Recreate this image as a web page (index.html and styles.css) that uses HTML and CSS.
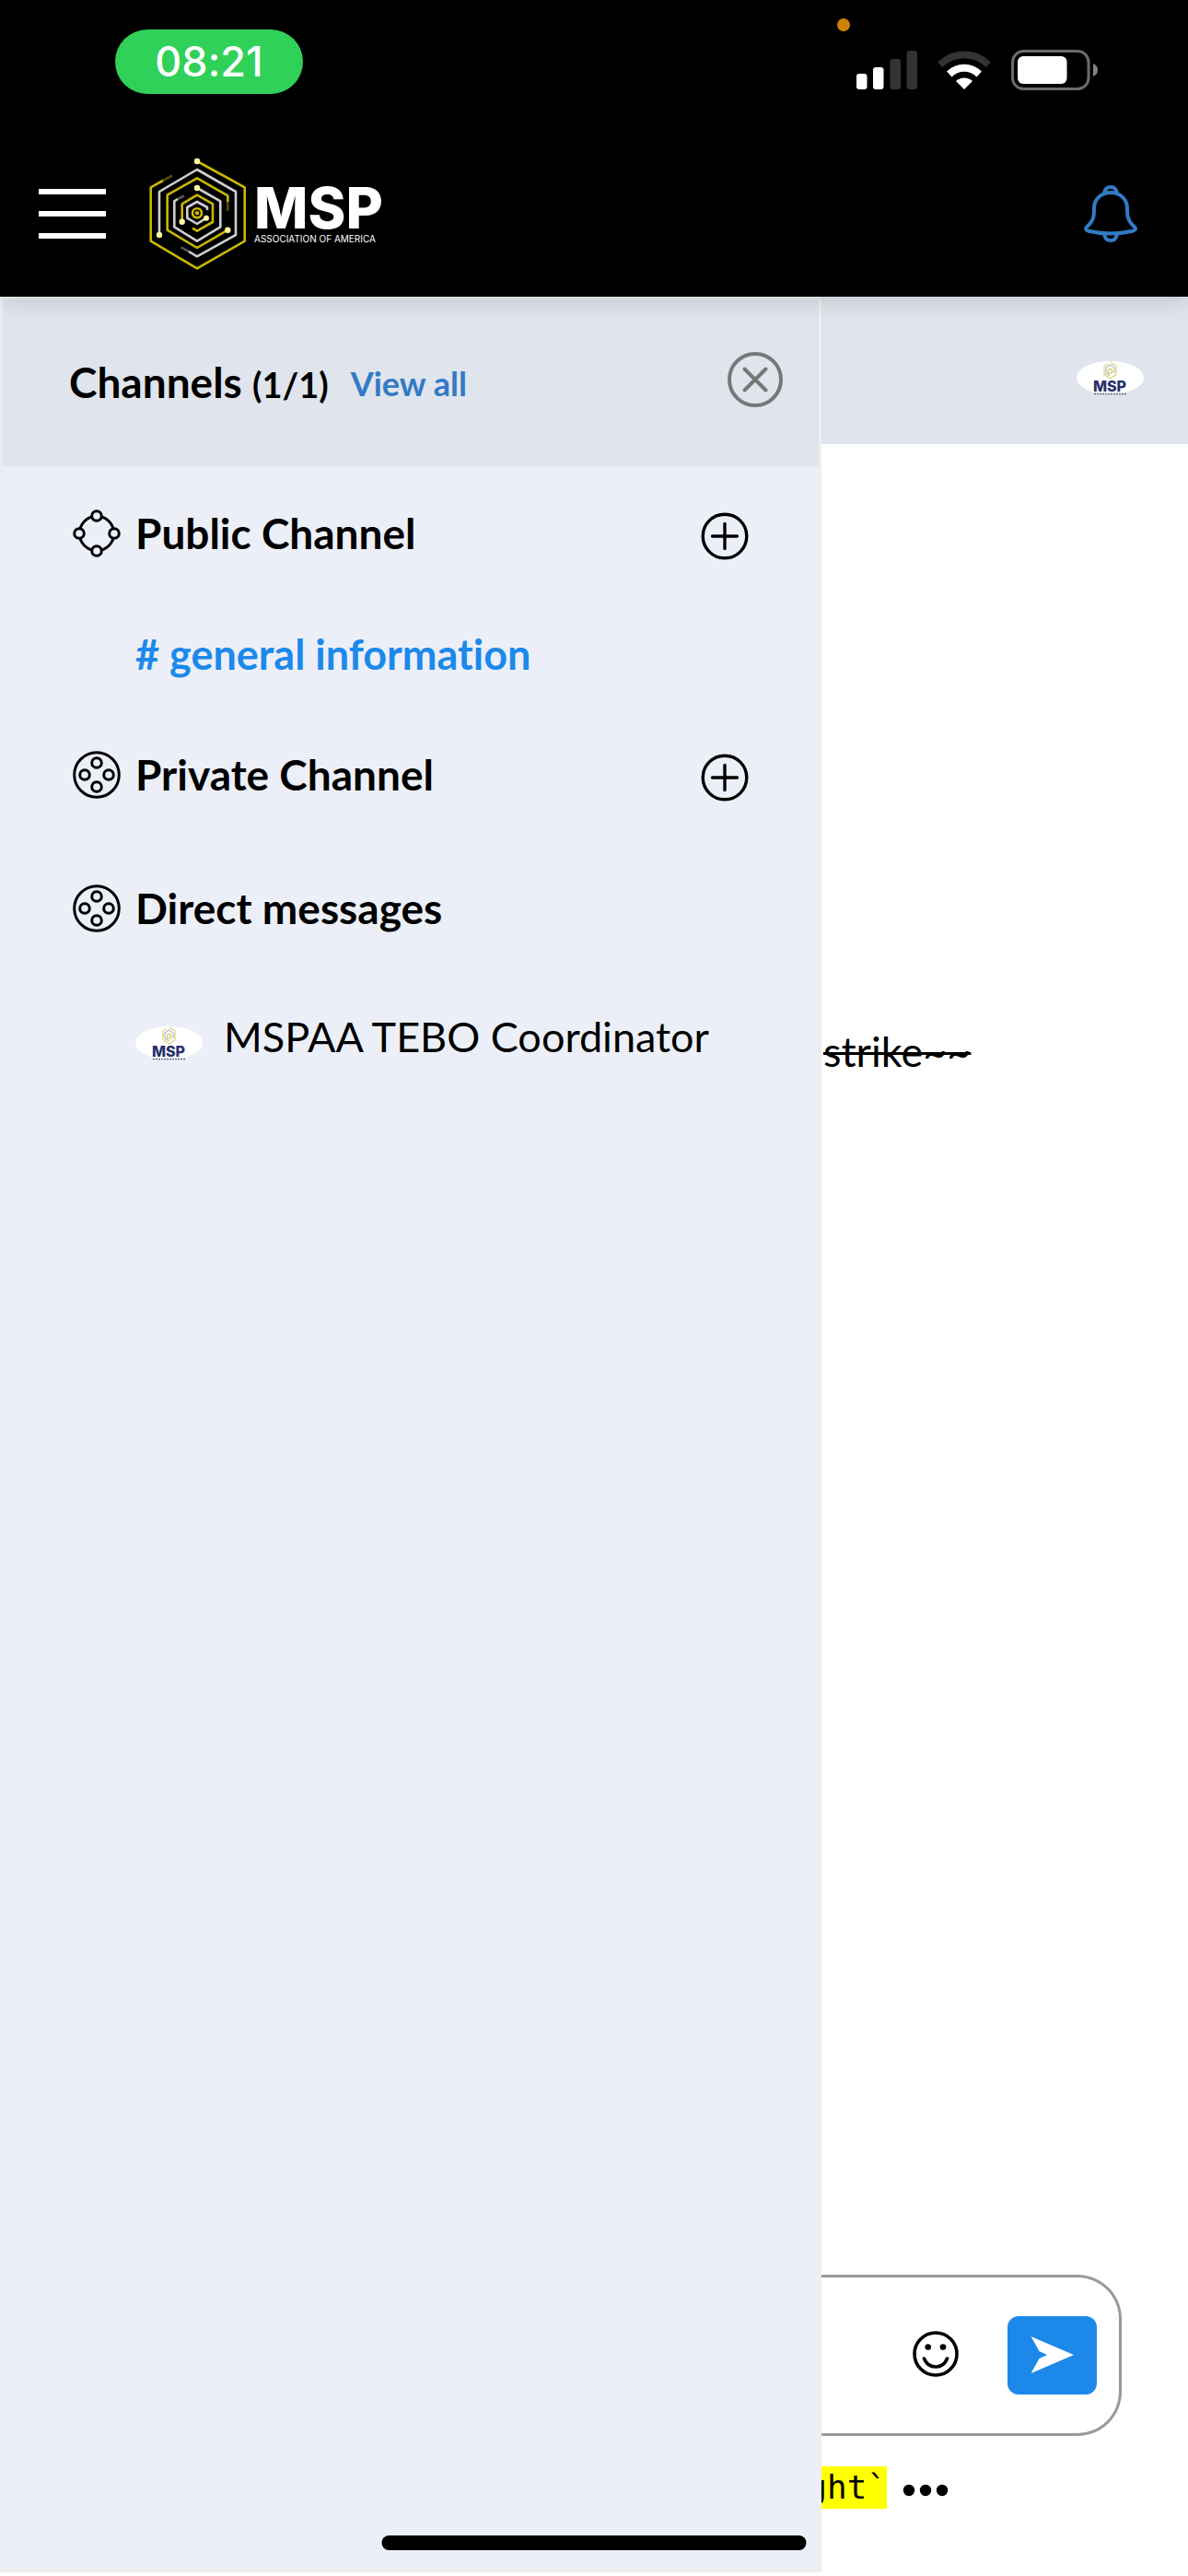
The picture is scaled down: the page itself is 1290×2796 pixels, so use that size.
FILE: index.html
```
<!DOCTYPE html>
<html lang="en">

<head>
    <meta charset="UTF-8">
    <meta name="viewport" content="width=device-width, initial-scale=1.0">
    <title>MSP Association of America - Channels</title>
    <link rel="stylesheet" href="styles.css">
</head>

<body>
    <!-- shared shapes -->
    <svg class="sprite" aria-hidden="true">
        <symbol id="hex-logo" viewBox="-2 -2 108 126">
            <g fill="none" stroke-width="2.6" stroke-linejoin="round">
                <path class="gold" d="M51 4 102.7 32.3V90.7L51 120.3 .7 90.7V32.3L14 25" />
                <path class="gold fade" d="M14 25 24 19.5" />
                <path class="silver" d="M10 84V37L51 13 93 37V84L51 107.3 42 102" />
                <path class="silver fade" d="M42 102 33.7 97.3" />
                <path class="gold" d="M84.3 48V41.3L51 22.3 18.7 40.7V78.7L51 98 84.3 78.7" />
                <path class="gold fade" d="M84.3 48V58" />
                <path class="silver" d="M51 33 76.3 47.3V75.3L51 90.7 26.3 75.3V47.3L30 45" />
                <path class="silver fade" d="M30 45 37 41.5" />
                <path class="gold" d="M34.7 69.7V50.3L51 40.7 68 50.3V70L51 79.7 46 76.7" />
                <path class="silver" d="M61 65.7 51 72 40.3 65.7V54L51 48 62 54V57" />
                <circle class="gold" cx="51" cy="60.3" r="5" />
                <circle class="gold" cx="51" cy="60.3" r="1" />
            </g>
            <g class="nodes">
                <circle cx="51" cy="4" r="3.2" />
                <circle cx="10" cy="84" r="3.2" />
                <circle cx="84.3" cy="78.7" r="3.2" />
                <circle cx="51" cy="33" r="3.2" />
                <circle cx="34.7" cy="69.7" r="3.2" />
                <circle cx="61" cy="65.7" r="3" />
            </g>
        </symbol>
        <symbol id="avatar" viewBox="0 0 73 38">
            <ellipse cx="36.5" cy="18" rx="36.5" ry="18" fill="#fff" />
            <g fill="none" stroke="#ddd573" stroke-width="1.2">
                <path d="M36.5 1 43 5V14.5L36.5 19 30 14.5V5L34 2.5" />
                <path d="M41 13V7L36.5 4 32 7V13L36.5 16" stroke="#b5b8c4" />
                <path d="M34.5 13V9.5L36.5 8 38.5 9.5V13Z" stroke="#d4c95a" />
            </g>
            <text x="36" y="33" text-anchor="middle" class="avatar-text">MSP</text>
            <path d="M19 35.5H54" stroke="#5c628c" stroke-width="1.5" stroke-dasharray="2 1" />
        </symbol>
        <symbol id="plus" viewBox="0 0 52 52">
            <g fill="none" stroke="#000" stroke-width="3.4" stroke-linecap="round">
                <circle cx="26" cy="26" r="23.8" />
                <path d="M26 12.5V39.500M12.5 26H39.5" />
            </g>
        </symbol>
        <symbol id="group" viewBox="0 0 52 52">
            <g fill="none" stroke="#000" stroke-width="3">
                <circle cx="26" cy="26" r="24.3" />
                <circle cx="26" cy="13" r="5.3" />
                <circle cx="13" cy="26" r="5.3" />
                <circle cx="39" cy="26" r="5.3" />
                <circle cx="26" cy="39" r="5.3" />
            </g>
        </symbol>
    </svg>

    <div class="status-bar">
        <span class="clock">08:21</span>
        <span class="mic-dot"></span>
        <div class="status-icons">
            <svg width="66" height="44" viewBox="0 0 66 44">
                <rect x="0" y="26" width="11.5" height="17" rx="3" fill="#fff" />
                <rect x="18" y="19" width="11.5" height="24" rx="3" fill="#fff" />
                <rect x="36.5" y="10" width="11.5" height="33" rx="3" fill="#333" />
                <rect x="54.5" y="1" width="11.5" height="42" rx="3" fill="#333" />
            </svg>
            <svg width="58" height="44" viewBox="0 0 58 44">
                <path d="M0 13.5A41 41 0 0 1 58 13.5L52.5 19A33 33 0 0 0 5.5 19Z" fill="#333" />
                <path d="M10 23.5A27 27 0 0 1 48 23.5L42.5 29.5A19 19 0 0 0 15.5 29.5Z" fill="#fff" />
                <path d="M20 34A13 13 0 0 1 38 34L29 43Z" fill="#fff" />
            </svg>
            <svg width="94" height="44" viewBox="0 0 94 44">
                <rect x="1.5" y="1.5" width="82.5" height="41" rx="12" fill="none" stroke="#6b6b6b" stroke-width="3" />
                <rect x="7" y="7" width="53.5" height="30" rx="6" fill="#fff" />
                <path d="M89 15Q94 17 94 22T89 29Z" fill="#808080" />
            </svg>
        </div>
    </div>

    <header class="topbar">
        <button class="menu-btn" aria-label="Menu">
            <span></span>
            <span></span>
            <span></span>
        </button>
        <a href="#" class="brand">
            <svg class="brand-mark" aria-hidden="true"><use href="#hex-logo" /></svg>
            <span class="brand-text">
                <span class="brand-name">MSP</span>
                <span class="brand-sub">ASSOCIATION OF AMERICA</span>
            </span>
        </a>
        <button class="bell-btn" aria-label="Notifications">
            <svg width="58" height="62" viewBox="0 0 58 62">
                <g fill="none" stroke="#337ac4" stroke-width="4" stroke-linejoin="round">
                    <path d="M29 8C18 8 11 16 11 25C11 34 11 38 2.5 46Q1 49 6 50Q29 55 52 50Q57 49 55.5 46C47 38 47 34 47 25C47 16 40 8 29 8Z" />
                    <path d="M22 9Q23 2 29 2T36 9" />
                    <path d="M22 53Q23 60 29 60T36 53" />
                </g>
            </svg>
        </button>
    </header>

    <main class="layout">
        <aside class="drawer">
            <div class="drawer-header">
                <h2>Channels <span class="count">(1/1)</span></h2>
                <a href="#" class="view-all">View all</a>
                <button class="close-btn" aria-label="Close">
                    <svg width="60" height="60" viewBox="0 0 60 60">
                        <g fill="none" stroke="#777" stroke-width="4" stroke-linecap="round">
                            <circle cx="30" cy="30" r="28" />
                            <path d="M18.5 18.5 41.5 41.5M41.5 18.5 18.5 41.5" />
                        </g>
                    </svg>
                </button>
            </div>

            <nav class="channels">
                <div class="row">
                    <svg class="icon" viewBox="0 0 52 52" aria-hidden="true">
                        <g fill="none" stroke="#000" stroke-width="3">
                            <circle cx="26" cy="26" r="18.7" />
                            <g fill="#eceff8">
                                <circle cx="26" cy="7" r="5.3" />
                                <circle cx="7" cy="26" r="5.3" />
                                <circle cx="45" cy="26" r="5.3" />
                                <circle cx="26" cy="45" r="5.3" />
                            </g>
                        </g>
                    </svg>
                    <h3>Public Channel</h3>
                    <button class="add-btn" aria-label="Add public channel">
                        <svg class="icon"><use href="#plus" /></svg>
                    </button>
                </div>
                <div class="row sub-row">
                    <a href="#" class="channel-link"># general information</a>
                </div>
                <div class="row">
                    <svg class="icon" aria-hidden="true"><use href="#group" /></svg>
                    <h3>Private Channel</h3>
                    <button class="add-btn" aria-label="Add private channel">
                        <svg class="icon"><use href="#plus" /></svg>
                    </button>
                </div>
                <div class="row direct">
                    <svg class="icon" aria-hidden="true"><use href="#group" /></svg>
                    <h3>Direct messages</h3>
                </div>
                <div class="row sub-row">
                    <a href="#" class="user-link">
                        <svg class="avatar" aria-hidden="true"><use href="#avatar" /></svg>
                        <span>MSPAA TEBO Coordinator</span>
                    </a>
                </div>
            </nav>
        </aside>

        <section class="chat">
            <div class="chat-header">
                <svg class="avatar" aria-hidden="true"><use href="#avatar" /></svg>
            </div>
            <div class="messages">
                <p><s>strike~~</s></p>
            </div>
            <div class="composer">
                <button class="emoji-btn" aria-label="Emoji">
                    <svg width="50" height="50" viewBox="0 0 50 50">
                        <g fill="none" stroke="#000" stroke-width="3.6" stroke-linecap="round">
                            <circle cx="25" cy="25" r="23" />
                            <path d="M12.5 30Q16 39 25 39T37.5 30" />
                        </g>
                        <circle cx="16.7" cy="17.5" r="3.3" />
                        <circle cx="33" cy="17.5" r="3.3" />
                    </svg>
                </button>
                <button class="send-btn" aria-label="Send">
                    <svg width="48" height="40" viewBox="0 0 48 40">
                        <path d="M.5 0 47 20 .5 40 9.5 24 18 20 9.5 16Z" fill="#fff" />
                    </svg>
                </button>
            </div>
            <div class="format-hint">
                <div class="code-hint"><code>ght`</code></div>
                <button class="more-btn" aria-label="More formatting">
                    <svg width="50" height="14" viewBox="0 0 50 14">
                        <circle cx="7" cy="7" r="6.2" />
                        <circle cx="25" cy="7" r="6.2" />
                        <circle cx="43" cy="7" r="6.2" />
                    </svg>
                </button>
            </div>
        </section>
    </main>

    <div class="home-indicator"></div>
</body>

</html>
```
FILE: styles.css
```
* {
    margin: 0;
    padding: 0;
    box-sizing: border-box;
}

body {
    font-family: Lato, "Liberation Sans", sans-serif;
    font-size: 45px;
    font-variant-ligatures: none;
    line-height: 54px;
    color: #000;
    background-color: #fff;
    display: flex;
    flex-direction: column;
    min-height: 100vh;
}

button {
    background: none;
    border: none;
    cursor: pointer;
}

a {
    text-decoration: none;
    color: inherit;
}

svg {
    display: block;
    flex-shrink: 0;
}

.sprite {
    display: none;
}

/* status bar */
.status-bar {
    position: relative;
    z-index: 3;
    display: flex;
    justify-content: space-between;
    align-items: flex-start;
    padding: 32px 98px 40px 125px;
    background-color: #000;
}

.clock {
    width: 204px;
    height: 70px;
    border-radius: 35px;
    background-color: #30d158;
    color: #fff;
    font-family: Inter, sans-serif;
    font-size: 45px;
    font-weight: 500;
    line-height: 70px;
    text-align: center;
}

.mic-dot {
    position: absolute;
    top: 20px;
    right: 367px;
    width: 14px;
    height: 14px;
    border-radius: 50%;
    background-color: #cd8108;
}

.status-icons {
    display: flex;
    gap: 22px;
    padding-top: 22px;
}

/* top bar */
.topbar {
    position: relative;
    z-index: 2;
    display: flex;
    align-items: center;
    height: 180px;
    padding: 0 55px 0 42px;
    background-color: #000;
    box-shadow: 0 4px 24px rgba(0, 0, 0, 0.15);
}

.menu-btn {
    display: flex;
    flex-direction: column;
    gap: 18px;
    width: 73px;
}

.menu-btn span {
    height: 6px;
    background-color: #fff;
}

.brand {
    display: flex;
    align-items: center;
    gap: 7px;
    margin-left: 46px;
}

.brand-mark {
    width: 108px;
    height: 126px;
}

.gold {
    stroke: #c8b800;
}

.silver {
    stroke: #cfcfd2;
}

.fade {
    opacity: 0.4;
}

.nodes {
    fill: #fff6a0;
}

.brand-text {
    display: flex;
    flex-direction: column;
    color: #fff;
    font-family: Inter, sans-serif;
}

.brand-name {
    font-size: 62px;
    font-weight: 800;
    line-height: 54px;
}

.brand-sub {
    font-size: 10px;
    line-height: 12px;
}

.bell-btn {
    margin-left: auto;
}

/* drawer + chat */
.layout {
    flex: 1;
    display: grid;
    grid-template-columns: 892fr 398fr;
}

.drawer {
    margin-bottom: 4px;
    border: 3px solid #eee;
    background-color: #eceff8;
}

.drawer-header {
    display: flex;
    align-items: center;
    height: 181px;
    padding: 0 39px 0 72px;
    background-color: #e0e4ec;
}

h2,
h3 {
    font-size: 46px;
    font-weight: 700;
}

.count {
    font-size: 38px;
}

.view-all {
    margin-left: 24px;
    color: #337ac4;
    font-size: 36px;
    font-weight: 700;
}

.close-btn {
    margin-left: auto;
    padding-bottom: 8px;
}

.channels {
    padding: 7px 76px;
}

.row {
    display: flex;
    align-items: center;
    gap: 16px;
    height: 131px;
}

.sub-row {
    padding-left: 68px;
}

.direct {
    margin: 14px 0 8px;
}

.icon {
    width: 52px;
    height: 52px;
}

.add-btn {
    margin-left: auto;
    padding-top: 6px;
}

.channel-link {
    color: #1c89ea;
    font-weight: 700;
}

.user-link {
    display: flex;
    gap: 23px;
}

.avatar {
    width: 73px;
    height: 38px;
}

.user-link .avatar {
    align-self: flex-end;
}

.avatar-text {
    fill: #27306b;
    font-family: Inter, sans-serif;
    font-size: 16px;
    font-weight: 800;
}

/* chat */
.chat {
    display: flex;
    flex-direction: column;
    overflow: hidden;
}

.chat-header {
    display: flex;
    justify-content: flex-end;
    height: 160px;
    padding: 70px 48px 0 0;
    background-color: #e0e4ec;
}

.messages {
    flex: 1;
    padding-top: 632px;
}

.messages s {
    padding-left: 2px;
    text-decoration-thickness: 3px;
}

.composer {
    display: flex;
    justify-content: flex-end;
    align-items: center;
    gap: 53px;
    height: 175px;
    margin-right: 72px;
    padding-right: 24px;
    border: 3px solid #999;
    border-left: none;
    border-radius: 0 48px 48px 0;
}

.emoji-btn {
    padding-bottom: 4px;
}

.send-btn {
    display: flex;
    align-items: center;
    justify-content: center;
    width: 97px;
    height: 85px;
    padding-bottom: 2px;
    border-radius: 12px;
    background-color: #1c89ea;
}

.format-hint {
    display: flex;
    align-items: center;
    gap: 17px;
    padding: 33px 0 73px;
}

.code-hint {
    display: flex;
    justify-content: flex-end;
    width: 71px;
    overflow: hidden;
}

.code-hint code {
    background-color: #ff0;
    font-family: "DejaVu Sans Mono", monospace;
    font-size: 36px;
    line-height: 46px;
}

.more-btn {
    padding-top: 6px;
}

.home-indicator {
    position: fixed;
    z-index: 4;
    bottom: 28px;
    left: 50%;
    width: 461px;
    height: 16px;
    border-radius: 8px;
    background-color: #000;
    transform: translateX(-50%);
}
```
